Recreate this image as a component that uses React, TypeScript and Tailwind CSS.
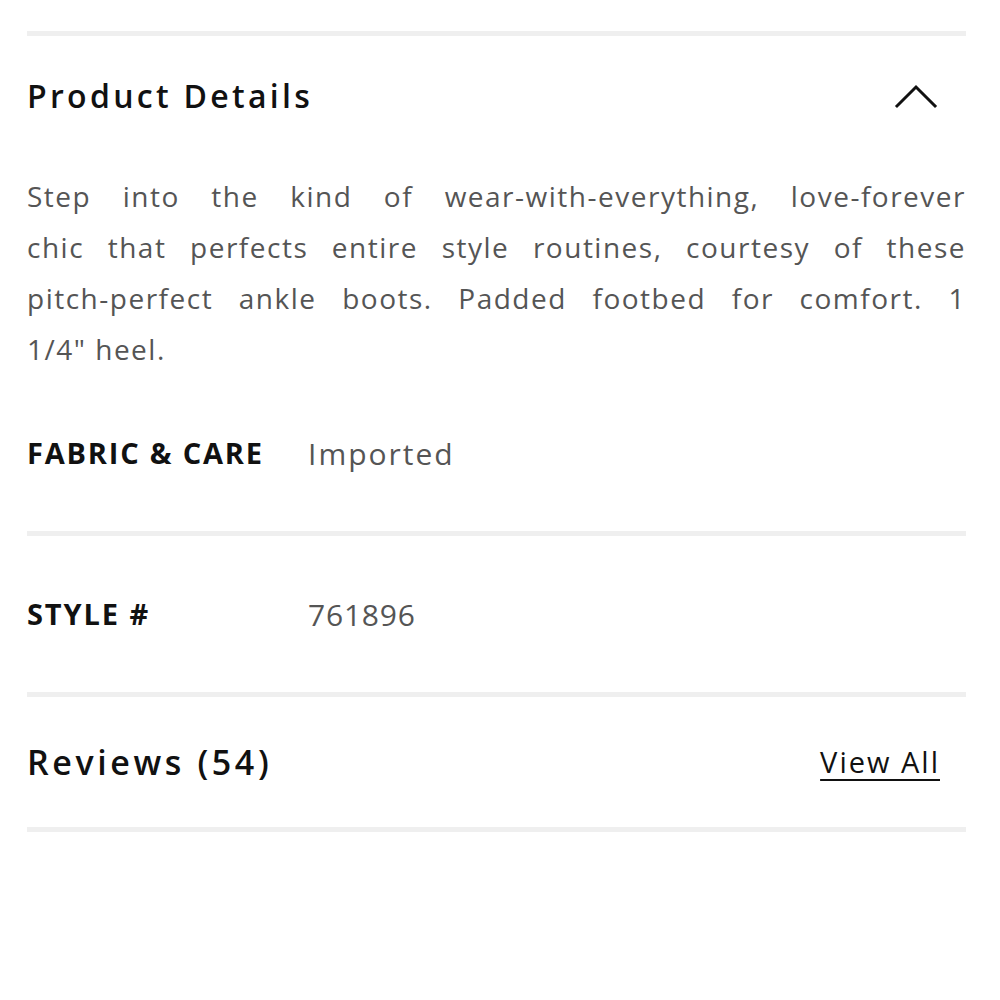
const lines = [
  'Step into the kind of wear-with-everything, love-forever',
  'chic that perfects entire style routines, courtesy of these',
  'pitch-perfect ankle boots. Padded footbed for comfort. 1',
];

function Divider() {
  return <div className="h-[5px] bg-[#efefef]" />;
}

function ChevronUp() {
  return (
    <svg width="44" height="26" viewBox="0 0 44 26" fill="none" className="mr-[28px]">
      <polyline points="3,23 22,4 41,23" stroke="#111" strokeWidth="3" strokeLinecap="square" />
    </svg>
  );
}

export default function App() {
  return (
    <div className="min-h-screen bg-white pl-[27px] pr-[34px] pt-[31px] font-['Open_Sans',sans-serif]">
      <Divider />
      <div className="flex h-[121px] items-center justify-between pb-[2px]">
        <h2 className="text-[32px] font-semibold tracking-[3.3px] text-[#111]">Product Details</h2>
        <ChevronUp />
      </div>
      <div className="mt-[14px] text-[28px] leading-[51px] text-[#555] tracking-[1.5px]">
        {lines.map((l) => (
          <p key={l} className="text-justify [text-align-last:justify]">{l}</p>
        ))}
        <p>1/4" heel.</p>
      </div>
      <div className="flex h-[156px] items-center">
        <span className="w-[281px] text-[29px] font-bold text-[#111] tracking-[1.8px]">FABRIC &amp; CARE</span>
        <span className="text-[30px] text-[#555] tracking-[2px]">Imported</span>
      </div>
      <Divider />
      <div className="flex h-[156px] items-center">
        <span className="w-[281px] text-[29px] font-bold text-[#111] tracking-[1.9px]">STYLE #</span>
        <span className="text-[30px] text-[#555] tracking-[0.8px]">761896</span>
      </div>
      <Divider />
      <div className="flex h-[130px] items-center justify-between">
        <h2 className="text-[34px] font-semibold text-[#111] tracking-[3.6px]">Reviews (54)</h2>
        <a href="#" className="mr-[26px] text-[29px] text-[#111] tracking-[2px] underline decoration-[2px] underline-offset-[6px]">View All</a>
      </div>
      <Divider />
    </div>
  );
}
